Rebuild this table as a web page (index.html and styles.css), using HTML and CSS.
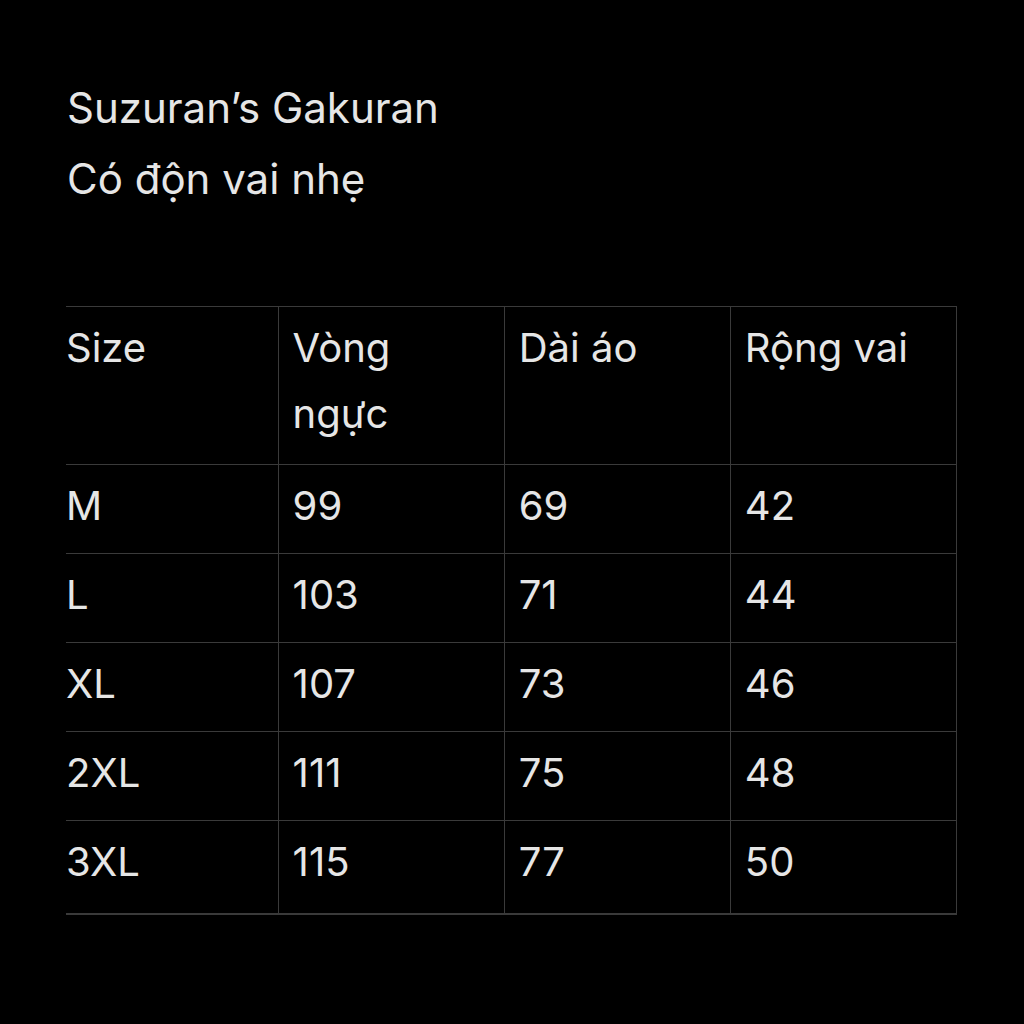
FILE: index.html
```html
<!DOCTYPE html>
<html lang="vi">
<head>
<meta charset="utf-8">
<link rel="stylesheet" href="styles.css">
</head>
<body>
<div class="page">
  <div class="title">
    <div class="line">Suzuran’s Gakuran</div>
    <div class="line">Có độn vai nhẹ</div>
  </div>
  <table class="sizes">
    <tr class="head"><td>Size</td><td>Vòng<br>ngực</td><td>Dài áo</td><td>Rộng vai</td></tr>
    <tr><td>M</td><td>99</td><td>69</td><td>42</td></tr>
    <tr><td>L</td><td>103</td><td>71</td><td>44</td></tr>
    <tr><td>XL</td><td>107</td><td>73</td><td>46</td></tr>
    <tr><td>2XL</td><td>111</td><td>75</td><td>48</td></tr>
    <tr class="last"><td>3XL</td><td>115</td><td>77</td><td>50</td></tr>
  </table>
</div>
</body>
</html>
```
FILE: styles.css
```css
html, body {
  margin: 0;
  padding: 0;
  background: #000;
}
body {
  width: 1024px;
  height: 1024px;
  overflow: hidden;
  font-family: Inter, "Noto Sans", sans-serif;
  color: #e6e6e6;
}
.page {
  padding: 72px 0 0 66px;
}
.title {
  font-size: 42px;
  line-height: 71px;
  margin-left: 1px;
}
.title .line {
  height: 71px;
}
.sizes {
  margin-top: 92px;
  border-collapse: collapse;
  width: 891px;
  table-layout: fixed;
  font-size: 40px;
  line-height: 66px;
}
.sizes td {
  box-sizing: border-box;
  border-top: 1px solid #3a3a3a;
  border-bottom: 1px solid #3a3a3a;
  border-left: 1px solid #3a3a3a;
  border-right: 1px solid #3a3a3a;
  padding: 8px 14px 14px 14px;
  vertical-align: top;
  width: 226px;
}
.sizes td:first-child {
  border-left: none;
  padding-left: 0;
  width: 212px;
}
.sizes .head td {
  padding-bottom: 17px;
}
.sizes .last td {
  padding-bottom: 18px;
  border-bottom-width: 2px;
}
```
